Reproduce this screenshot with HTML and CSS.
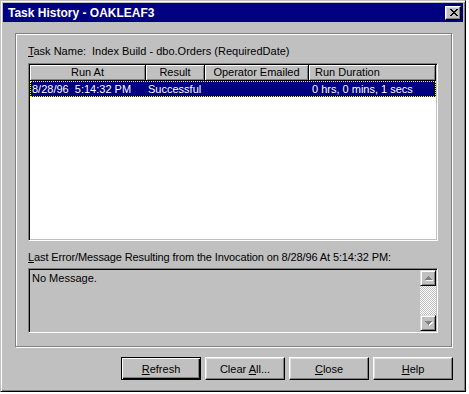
FILE: index.html
```html
<!DOCTYPE html>
<html>
<head>
<meta charset="utf-8">
<title>Task History - OAKLEAF3</title>
<link rel="stylesheet" href="styles.css">
</head>
<body>
<div class="window">
  <div class="titlebar">
    <span class="title">Task History - OAKLEAF3</span>
    <span class="closebtn">
      <svg width="8" height="7" viewBox="0 0 8 7" shape-rendering="crispEdges"><path fill="#000" d="M0 0h2v1H0z M6 0h2v1H6z M1 1h2v1H1z M5 1h2v1H5z M2 2h4v1H2z M3 3h2v1H3z M2 4h4v1H2z M1 5h2v1H1z M5 5h2v1H5z M0 6h2v1H0z M6 6h2v1H6z"/></svg>
    </span>
  </div>
  <div class="client">
    <div class="group">
      <div class="taskrow"><span class="lbl"><u>T</u>ask Name:</span><span class="val">Index Build - dbo.Orders (RequiredDate)</span></div>
      <div class="listview">
        <div class="header">
          <div class="hcell c1 center">Run At</div>
          <div class="hcell c2 center">Result</div>
          <div class="hcell c3 center">Operator Emailed</div>
          <div class="hcell c4 left">Run Duration</div>
        </div>
        <div class="row selected">
          <span class="cell c1">8/28/96&nbsp;&nbsp;5:14:32 PM</span>
          <span class="cell c2">Successful</span>
          <span class="cell c3"></span>
          <span class="cell c4">0 hrs, 0 mins, 1 secs</span>
        </div>
      </div>
      <div class="msglabel"><u>L</u>ast Error/Message Resulting from the Invocation on 8/28/96 At 5:14:32 PM:</div>
      <div class="msgbox">
        <div class="msgtext">No Message.</div>
        <div class="scrollbar">
          <div class="sbtn">
            <svg width="8" height="5" viewBox="0 0 8 5" shape-rendering="crispEdges"><path fill="#fff" d="M4 1h1v1H4z M3 2h3v1H3z M2 3h5v1H2z M1 4h7v1H1z"/><path fill="#808080" d="M3 0h1v1H3z M2 1h3v1H2z M1 2h5v1H1z M0 3h7v1H0z"/></svg>
          </div>
          <div class="track"></div>
          <div class="sbtn">
            <svg width="8" height="5" viewBox="0 0 8 5" shape-rendering="crispEdges"><path fill="#fff" d="M1 1h7v1H1z M2 2h5v1H2z M3 3h3v1H3z M4 4h1v1H4z"/><path fill="#808080" d="M0 0h7v1H0z M1 1h5v1H1z M2 2h3v1H2z M3 3h1v1H3z"/></svg>
          </div>
        </div>
      </div>
    </div>
    <div class="buttons">
      <div class="btn default"><span><u>R</u>efresh</span></div>
      <div class="btn"><span>Clear <u>A</u>ll...</span></div>
      <div class="btn"><span><u>C</u>lose</span></div>
      <div class="btn"><span><u>H</u>elp</span></div>
    </div>
  </div>
</div>
</body>
</html>
```

FILE: styles.css
```css
* { box-sizing: border-box; }
html, body { margin: 0; padding: 0; background: #fff; }
body {
  font-family: "Liberation Sans", Arial, sans-serif;
  font-size: 11px;
  color: #000;
}
u { text-decoration: underline; text-underline-offset: 1px; }

.window {
  width: 466px;
  height: 392px;
  background: #c0c0c0;
  border: 1px solid;
  border-color: #c0c0c0 #000 #000 #c0c0c0;
  box-shadow: inset 1px 1px 0 #fff, inset -1px -1px 0 #808080;
  padding: 2px;
  display: flex;
  flex-direction: column;
}

.titlebar {
  height: 19px;
  background: #000080;
  color: #fff;
  display: flex;
  align-items: center;
  justify-content: space-between;
  padding: 0 2px 0 5px;
  flex: none;
}
.title {
  font-weight: bold;
  font-size: 12px;
  line-height: 14px;
}
.closebtn {
  width: 16px;
  height: 14px;
  background: #c0c0c0;
  border: 1px solid;
  border-color: #fff #000 #000 #fff;
  box-shadow: inset -1px -1px 0 #808080, inset 1px 1px 0 #dfdfdf;
  display: flex;
  align-items: center;
  justify-content: center;
  padding-left: 1px;
}
.closebtn svg { display: block; }

.client {
  padding: 11px 0 0 12px;
  display: flex;
  flex-direction: column;
}

.group {
  width: 437px;
  height: 314px;
  border: 1px solid #808080;
  box-shadow: 1px 1px 0 #fff, inset 1px 1px 0 #fff;
  padding: 10px 0 0 12px;
  display: flex;
  flex-direction: column;
}

.taskrow {
  height: 14px;
  line-height: 14px;
  display: flex;
  white-space: nowrap;
}
.lbl { width: 64px; }

.listview {
  margin-top: 5px;
  width: 410px;
  height: 178px;
  background: #fff;
  border: 1px solid;
  border-color: #808080 #fff #fff #808080;
  box-shadow: inset 1px 1px 0 #000, inset -1px -1px 0 #c0c0c0;
  padding: 1px;
  overflow: hidden;
}
.header {
  display: flex;
  height: 16px;
}
.hcell {
  height: 16px;
  line-height: 14px;
  background: #c0c0c0;
  border-right: 1px solid #000;
  border-bottom: 1px solid #000;
  box-shadow: inset 1px 1px 0 #fff, inset -1px -1px 0 #808080;
  white-space: nowrap;
  overflow: hidden;
  flex: none;
}
.center { text-align: center; }
.left { padding-left: 6px; }
.c1 { width: 116px; }
.c2 { width: 59px; }
.c3 { width: 104px; }
.c4 { width: 127px; }

.row {
  display: flex;
  height: 16px;
  line-height: 14px;
  white-space: nowrap;
}
.row.selected {
  background: #000080;
  color: #fff;
  border: 1px dotted #ffff00;
}
.cell { flex: none; }
.row .c1 { width: 115px; padding-left: 1px; }
.row .c2 { padding-left: 2px; }
.row .c4 { padding-left: 3px; width: 126px; }

.msglabel {
  margin-top: 10px;
  height: 13px;
  line-height: 13px;
  white-space: nowrap;
  letter-spacing: -0.12px;
}

.msgbox {
  margin-top: 4px;
  width: 410px;
  height: 65px;
  background: #c0c0c0;
  border: 1px solid;
  border-color: #808080 #fff #fff #808080;
  box-shadow: inset 1px 1px 0 #000, inset -1px -1px 0 #c0c0c0;
  padding: 1px;
  display: flex;
}
.msgtext {
  flex: 1;
  padding: 2px 0 0 2px;
  line-height: 13px;
}
.scrollbar {
  width: 16px;
  display: flex;
  flex-direction: column;
}
.sbtn {
  height: 16px;
  flex: none;
  background: #c0c0c0;
  border: 1px solid;
  border-color: #dfdfdf #000 #000 #dfdfdf;
  box-shadow: inset 1px 1px 0 #fff, inset -1px -1px 0 #808080;
  display: flex;
  align-items: center;
  justify-content: center;
  padding-left: 1px;
}
.sbtn svg { display: block; }
.track {
  flex: 1;
  background-color: #c0c0c0;
  background-image: conic-gradient(#fff 25%, #c0c0c0 0 50%, #fff 0 75%, #c0c0c0 0);
  background-size: 2px 2px;
}

.buttons {
  margin-top: 10px;
  width: 438px;
  display: flex;
  justify-content: flex-end;
  gap: 4px;
}
.btn {
  width: 80px;
  height: 23px;
  background: #c0c0c0;
  border: 1px solid;
  border-color: #fff #000 #000 #fff;
  box-shadow: inset -1px -1px 0 #808080, inset 1px 1px 0 #dfdfdf;
  display: flex;
  align-items: center;
  justify-content: center;
  white-space: nowrap;
}
.btn.default {
  border: 1px solid #000;
  box-shadow: inset 1px 1px 0 #fff, inset -1px -1px 0 #000, inset -2px -2px 0 #808080;
}
```
